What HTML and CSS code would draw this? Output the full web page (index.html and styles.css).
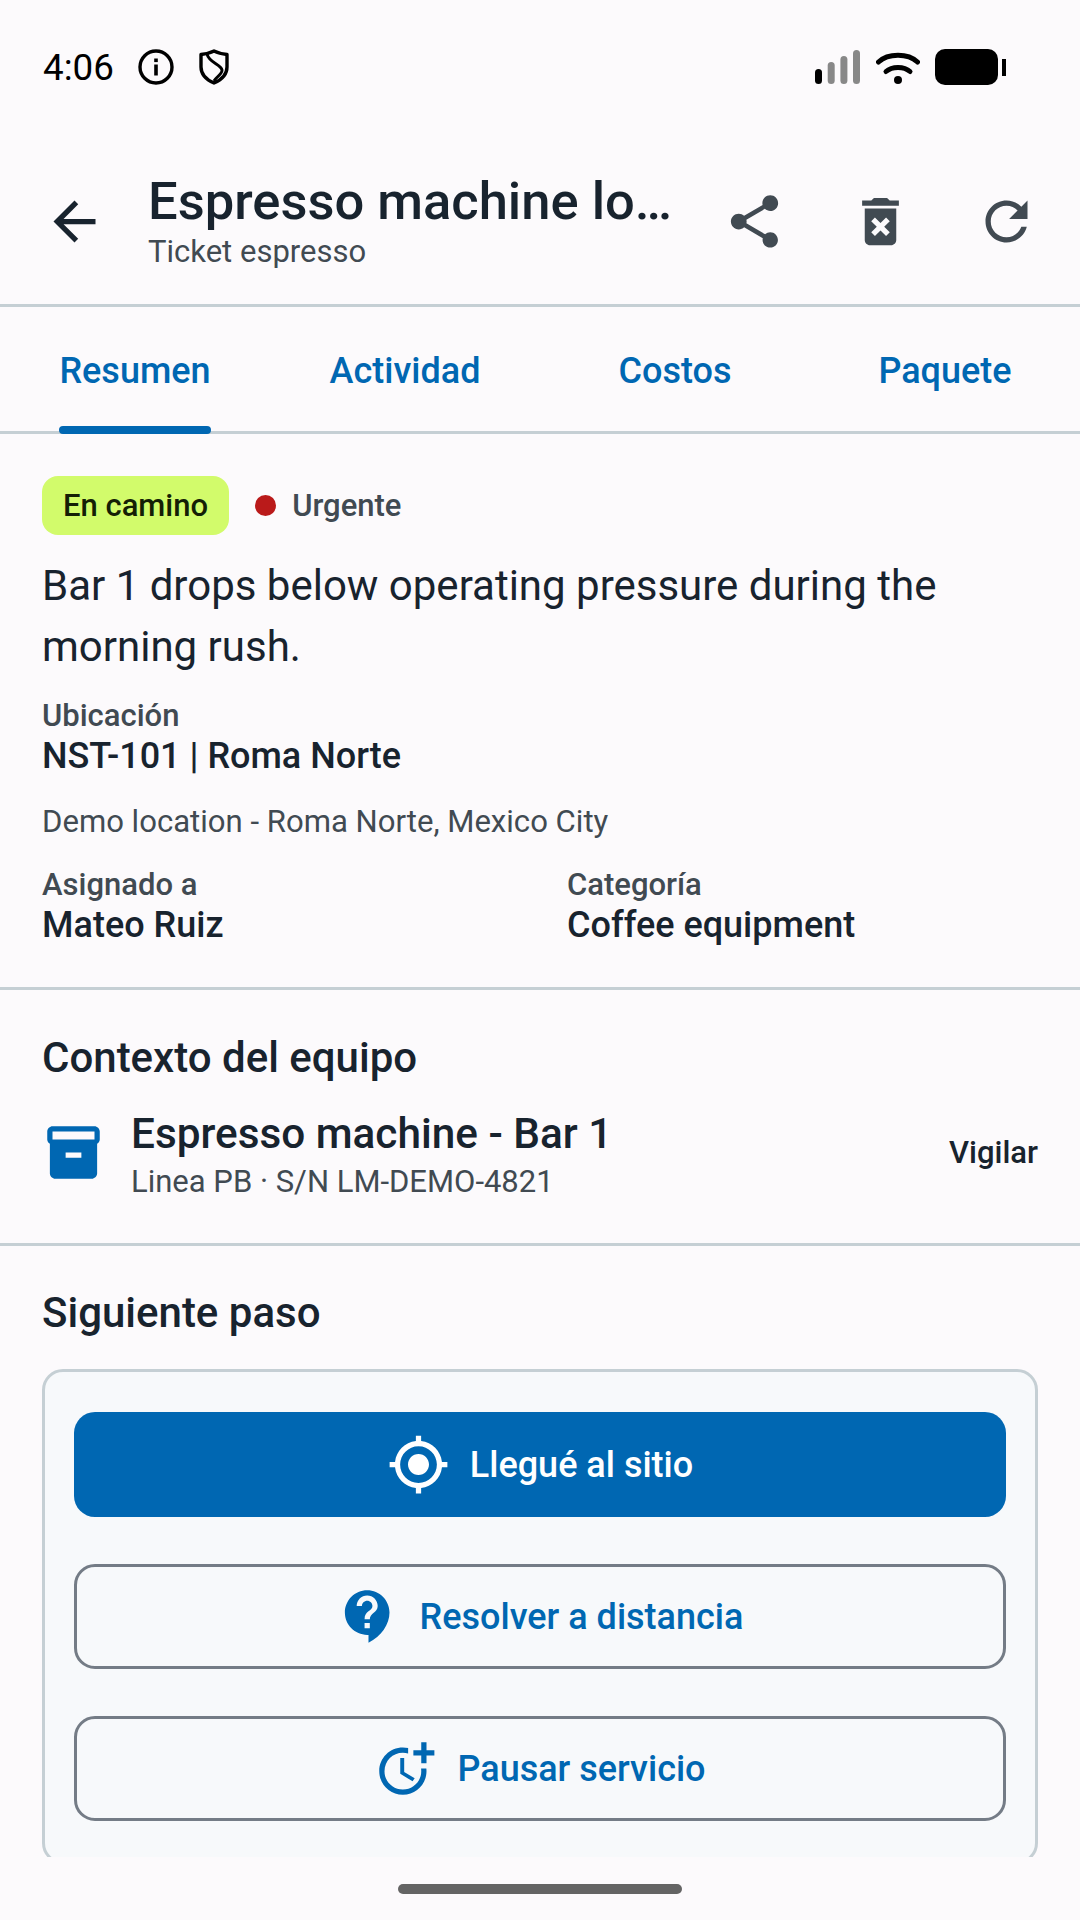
FILE: index.html
```html
<!DOCTYPE html>
<html lang="es">
<head>
    <meta charset="UTF-8">
    <meta name="viewport" content="width=device-width, initial-scale=1.0">
    <title>Ticket espresso</title>
    <link rel="stylesheet" href="styles.css">
</head>
<body>
    <div class="status-bar">
        <span class="status-time">4:06</span>
        <svg class="status-info" viewBox="0 0 36 36"><circle cx="18" cy="18" r="16" fill="none" stroke="#000" stroke-width="3.4"/><rect x="16.2" y="15.5" width="3.6" height="11" fill="#000"/><rect x="16.2" y="9.5" width="3.6" height="3.6" fill="#000"/></svg>
        <svg class="status-shield" viewBox="0 0 30 36"><path d="M15 2 C19 4 24 5 28 5.500 V18 C28 26 22 31 15 34 C8 31 2 26 2 18 V5.500 C6 5 11 4 15 2 Z" fill="none" stroke="#000" stroke-width="3.4" stroke-linejoin="round"/><path d="M8 5 C10 14 22 15 23 21 C23.500 25 18 27 15 32" fill="none" stroke="#000" stroke-width="3"/></svg>
        <span class="status-spacer"></span>
        <svg class="status-signal" viewBox="0 0 45 34"><rect x="0" y="19" width="7" height="15" rx="3.5" fill="#000"/><rect x="12.700" y="12" width="7" height="22" rx="3.5" fill="#888"/><rect x="25.400" y="6" width="7" height="28" rx="3.5" fill="#888"/><rect x="38" y="0" width="7" height="34" rx="3.5" fill="#888"/></svg>
        <svg class="status-wifi" viewBox="0 0 44 34"><path d="M2.500 12 C12 3 32 3 41.500 12" fill="none" stroke="#000" stroke-width="5" stroke-linecap="round"/><path d="M10 21.500 C16 16 28 16 34 21.500" fill="none" stroke="#000" stroke-width="5" stroke-linecap="round"/><circle cx="22" cy="30" r="4" fill="#000"/></svg>
        <span class="status-battery"><span class="battery-body"></span><span class="battery-cap"></span></span>
    </div>

    <header class="app-bar">
        <button class="icon-button back-button">
            <svg class="icon" viewBox="0 0 24 24"><path d="M20 11H7.830l5.590-5.590L12 4l-8 8 8 8 1.410-1.410L7.830 13H20v-2z"/></svg>
        </button>
        <div class="app-title">
            <h1>Espresso machine lo…</h1>
            <p>Ticket espresso</p>
        </div>
        <button class="icon-button">
            <svg class="icon" viewBox="0 0 24 24"><path d="M18 16.080c-.76 0-1.440.3-1.960.77L8.910 12.700c.05-.23.09-.46.09-.7s-.04-.47-.09-.7l7.050-4.110c.54.5 1.250.81 2.040.81 1.660 0 3-1.340 3-3s-1.340-3-3-3-3 1.340-3 3c0 .24.04.47.09.7L8.040 9.810C7.500 9.310 6.790 9 6 9c-1.660 0-3 1.340-3 3s1.340 3 3 3c.79 0 1.500-.31 2.040-.81l7.120 4.160c-.05.21-.08.43-.08.65 0 1.610 1.310 2.920 2.920 2.920s2.920-1.310 2.920-2.920-1.310-2.920-2.920-2.920z"/></svg>
        </button>
        <button class="icon-button">
            <svg class="icon" viewBox="0 0 24 24"><path d="M6 19c0 1.100.9 2 2 2h8c1.100 0 2-.9 2-2V7H6v12zm2.460-7.120 1.410-1.410L12 12.590l2.120-2.120 1.410 1.410L13.410 14l2.120 2.120-1.410 1.410L12 15.410l-2.120 2.120-1.410-1.410L10.590 14l-2.130-2.120zM15.500 4l-1-1h-5l-1 1H5v2h14V4z"/></svg>
        </button>
        <button class="icon-button">
            <svg class="icon" viewBox="0 0 24 24"><path d="M17.650 6.350C16.200 4.900 14.210 4 12 4c-4.420 0-7.990 3.580-7.990 8s3.570 8 7.990 8c3.730 0 6.840-2.550 7.730-6h-2.080c-.82 2.330-3.040 4-5.650 4-3.310 0-6-2.690-6-6s2.690-6 6-6c1.660 0 3.140.69 4.220 1.780L13 11h7V4l-2.350 2.350z"/></svg>
        </button>
    </header>

    <nav class="tabs">
        <div class="tab active"><span>Resumen</span></div>
        <div class="tab"><span>Actividad</span></div>
        <div class="tab"><span>Costos</span></div>
        <div class="tab"><span>Paquete</span></div>
    </nav>

    <main class="content">
        <section class="section summary">
            <div class="badges">
                <span class="status-badge">En camino</span>
                <span class="priority-dot"></span>
                <span class="priority-text">Urgente</span>
            </div>
            <p class="description">Bar 1 drops below operating pressure during the morning rush.</p>
            <div class="field">
                <span class="field-label">Ubicación</span>
                <span class="field-value">NST-101 | Roma Norte</span>
            </div>
            <p class="address">Demo location - Roma Norte, Mexico City</p>
            <div class="field-grid">
                <div class="field">
                    <span class="field-label">Asignado a</span>
                    <span class="field-value">Mateo Ruiz</span>
                </div>
                <div class="field">
                    <span class="field-label">Categoría</span>
                    <span class="field-value">Coffee equipment</span>
                </div>
            </div>
        </section>

        <section class="section equipment">
            <h2>Contexto del equipo</h2>
            <div class="equipment-row">
                <svg class="icon icon-blue" viewBox="0 0 24 24"><path d="M20 2H4c-1 0-2 .9-2 2v3.010c0 .72.43 1.340 1 1.690V20c0 1.100 1.100 2 2 2h14c.9 0 2-.9 2-2V8.700c.57-.35 1-.97 1-1.690V4c0-1.100-1-2-2-2zm-5 12H9v-2h6v2zm5-7H4V4l16-.02V7z"/></svg>
                <div class="equipment-text">
                    <span class="equipment-name">Espresso machine - Bar 1</span>
                    <span class="equipment-serial">Linea PB · S/N LM-DEMO-4821</span>
                </div>
                <span class="watch-link">Vigilar</span>
            </div>
        </section>

        <section class="section next-step">
            <h2>Siguiente paso</h2>
            <div class="action-card">
                <button class="action primary">
                    <svg class="icon" viewBox="0 0 24 24"><path d="M12 8c-2.210 0-4 1.790-4 4s1.790 4 4 4 4-1.790 4-4-1.790-4-4-4zm8.940 3c-.46-4.170-3.770-7.480-7.940-7.940V1h-2v2.060C6.830 3.520 3.520 6.830 3.060 11H1v2h2.060c.46 4.170 3.770 7.480 7.940 7.940V23h2v-2.060c4.170-.46 7.480-3.770 7.940-7.940H23v-2h-2.060zM12 19c-3.870 0-7-3.130-7-7s3.130-7 7-7 7 3.130 7 7-3.130 7-7 7z"/></svg>
                    Llegué al sitio
                </button>
                <button class="action">
                    <svg class="icon" viewBox="0 0 24 24"><path d="M11.500 2C6.810 2 3 5.810 3 10.500S6.810 19 11.500 19h.5v3c4.860-2.340 8-7 8-11.500C20 5.810 16.190 2 11.500 2zm1 14.500h-2v-2h2v2zm0-3.500h-2c0-3.250 3-3 3-5 0-1.100-.9-2-2-2s-2 .9-2 2h-2c0-2.210 1.790-4 4-4s4 1.790 4 4c0 2.500-3 2.750-3 5z"/></svg>
                    Resolver a distancia
                </button>
                <button class="action">
                    <svg class="icon" viewBox="0 0 24 24"><path d="M10 8v6l4.700 2.900.8-1.200-4-2.400V8z"/><path d="M17.920 12c.05.33.08.66.08 1 0 3.900-3.100 7-7 7s-7-3.100-7-7 3.100-7 7-7c.7 0 1.370.1 2 .29V4.230c-.64-.15-1.310-.23-2-.23-5 0-9 4-9 9s4 9 9 9 9-4 9-9c0-.34-.02-.67-.06-1h-2.020z"/><path d="M20 5V2h-2v3h-3v2h3v3h2V7h3V5z"/></svg>
                    Pausar servicio
                </button>
            </div>
        </section>
    </main>

    <div class="nav-bar"><span class="nav-handle"></span></div>
</body>
</html>
```

FILE: styles.css
```css
* {
    box-sizing: border-box;
}

html, body {
    margin: 0;
    height: 1920px;
}

body {
    display: flex;
    flex-direction: column;
    overflow: hidden;
    background-color: #fcfafc;
    color: #18232e;
    font-family: Roboto, "Noto Sans", sans-serif;
}

h1, h2, p {
    margin: 0;
}

button {
    border: none;
    background: none;
    padding: 0;
    font-family: inherit;
}

.icon {
    display: block;
    width: 63px;
    height: 63px;
    flex: none;
    fill: currentColor;
}

.icon-blue {
    color: #0067b2;
}

/* barra de estado */
.status-bar {
    display: flex;
    align-items: center;
    height: 134px;
    padding: 0 74px 0 43px;
    color: #000;
}

.status-time {
    font-size: 36.75px;
    width: 95px;
}

.status-info {
    width: 36px;
    height: 36px;
}

.status-shield {
    width: 30px;
    height: 36px;
    margin-left: 25px;
}

.status-spacer {
    flex: 1;
}

.status-signal {
    width: 45px;
    height: 34px;
}

.status-wifi {
    width: 44px;
    height: 34px;
    margin-left: 16px;
}

.status-battery {
    display: flex;
    align-items: center;
    margin-left: 15px;
}

.battery-body {
    width: 63px;
    height: 36px;
    border-radius: 10px;
    background-color: #000;
}

.battery-cap {
    width: 4px;
    height: 17px;
    margin-left: 4px;
    background-color: #000;
}

/* cabecera */
.app-bar {
    display: flex;
    align-items: center;
    height: 173px;
    padding: 0 11px;
    border-bottom: 3px solid #c5cfd4;
}

.icon-button {
    display: flex;
    align-items: center;
    justify-content: center;
    flex: none;
    width: 126px;
    height: 126px;
    margin-top: 5px;
    color: #414a52;
}

.back-button {
    color: #18232e;
}

.app-title {
    flex: 1;
    min-width: 0;
    padding: 1px 0 0 11px;
}

.app-title h1 {
    font-size: 52.5px;
    font-weight: 500;
    line-height: 64px;
    white-space: nowrap;
}

.app-title p {
    font-size: 31px;
    line-height: 38px;
    color: #414a52;
}

/* pestañas */
.tabs {
    display: grid;
    grid-template-columns: repeat(4, 1fr);
    height: 127px;
    border-bottom: 3px solid #c5cfd4;
}

.tab {
    display: flex;
    justify-content: center;
    color: #0067b2;
    font-size: 36px;
    font-weight: 500;
}

.tab span {
    position: relative;
    display: flex;
    align-items: center;
    height: 100%;
    padding-top: 4px;
}

.tab.active span::after {
    content: "";
    position: absolute;
    left: 0;
    right: 0;
    bottom: -3px;
    height: 8px;
    border-radius: 4px;
    background-color: #0067b2;
}

/* contenido */
.content {
    flex: 1;
    min-height: 0;
    overflow: hidden;
}

.section {
    padding: 0 42px;
    border-bottom: 3px solid #c5cfd4;
}

.section h2 {
    font-size: 42px;
    font-weight: 500;
    line-height: 48px;
}

.summary {
    padding-top: 42px;
    padding-bottom: 42px;
}

.badges {
    display: flex;
    align-items: center;
    height: 59px;
}

.status-badge {
    display: flex;
    align-items: center;
    height: 59px;
    padding: 0 21px;
    border-radius: 16px;
    background-color: #d2fb6b;
    color: #141f05;
    font-size: 31px;
    font-weight: 500;
}

.priority-dot {
    width: 21px;
    height: 21px;
    margin-left: 26px;
    border-radius: 50%;
    background-color: #ba1a1a;
}

.priority-text {
    margin-left: 16px;
    color: #414a52;
    font-size: 31px;
    font-weight: 500;
}

.description {
    margin-top: 20px;
    font-size: 42px;
    line-height: 61px;
}

.field {
    display: flex;
    flex-direction: column;
}

.field-label {
    color: #414a52;
    font-size: 31px;
    font-weight: 500;
    line-height: 40px;
}

.field-value {
    font-size: 36px;
    font-weight: 500;
    line-height: 40px;
}

.summary > .field {
    margin-top: 19px;
}

.address {
    margin-top: 26px;
    color: #414a52;
    font-size: 31.1px;
    line-height: 40px;
}

.field-grid {
    display: grid;
    grid-template-columns: 1fr 1fr;
    column-gap: 54px;
    margin-top: 23px;
}

.equipment {
    padding-top: 44px;
    padding-bottom: 37px;
}

.equipment-row {
    display: flex;
    align-items: center;
    margin-top: 17px;
}

.equipment-text {
    display: flex;
    flex-direction: column;
    flex: 1;
    margin-left: 26px;
    padding-top: 11px;
}

.equipment-name {
    font-size: 42.3px;
    font-weight: 500;
    line-height: 48px;
}

.equipment-serial {
    color: #414a52;
    font-size: 31px;
    line-height: 48px;
}

.watch-link {
    font-size: 31px;
    font-weight: 500;
}

.next-step {
    padding-top: 43px;
    border-bottom: none;
}

.action-card {
    display: flex;
    flex-direction: column;
    gap: 47px;
    margin-top: 32px;
    padding: 40px 29px;
    border: 3px solid #c5cfd4;
    border-radius: 21px;
    background-color: #f7f9fb;
}

.action {
    display: flex;
    align-items: center;
    justify-content: center;
    gap: 20px;
    height: 105px;
    flex: none;
    border: 3px solid #747c86;
    border-radius: 21px;
    color: #0067b2;
    font-size: 36px;
    font-weight: 500;
}

.action.primary {
    border: none;
    background-color: #0067b2;
    color: #fff;
}

/* barra de navegación */
.nav-bar {
    display: flex;
    justify-content: center;
    flex: none;
    height: 63px;
    padding-top: 27px;
}

.nav-handle {
    width: 284px;
    height: 10px;
    border-radius: 5px;
    background-color: #646464;
}
```
